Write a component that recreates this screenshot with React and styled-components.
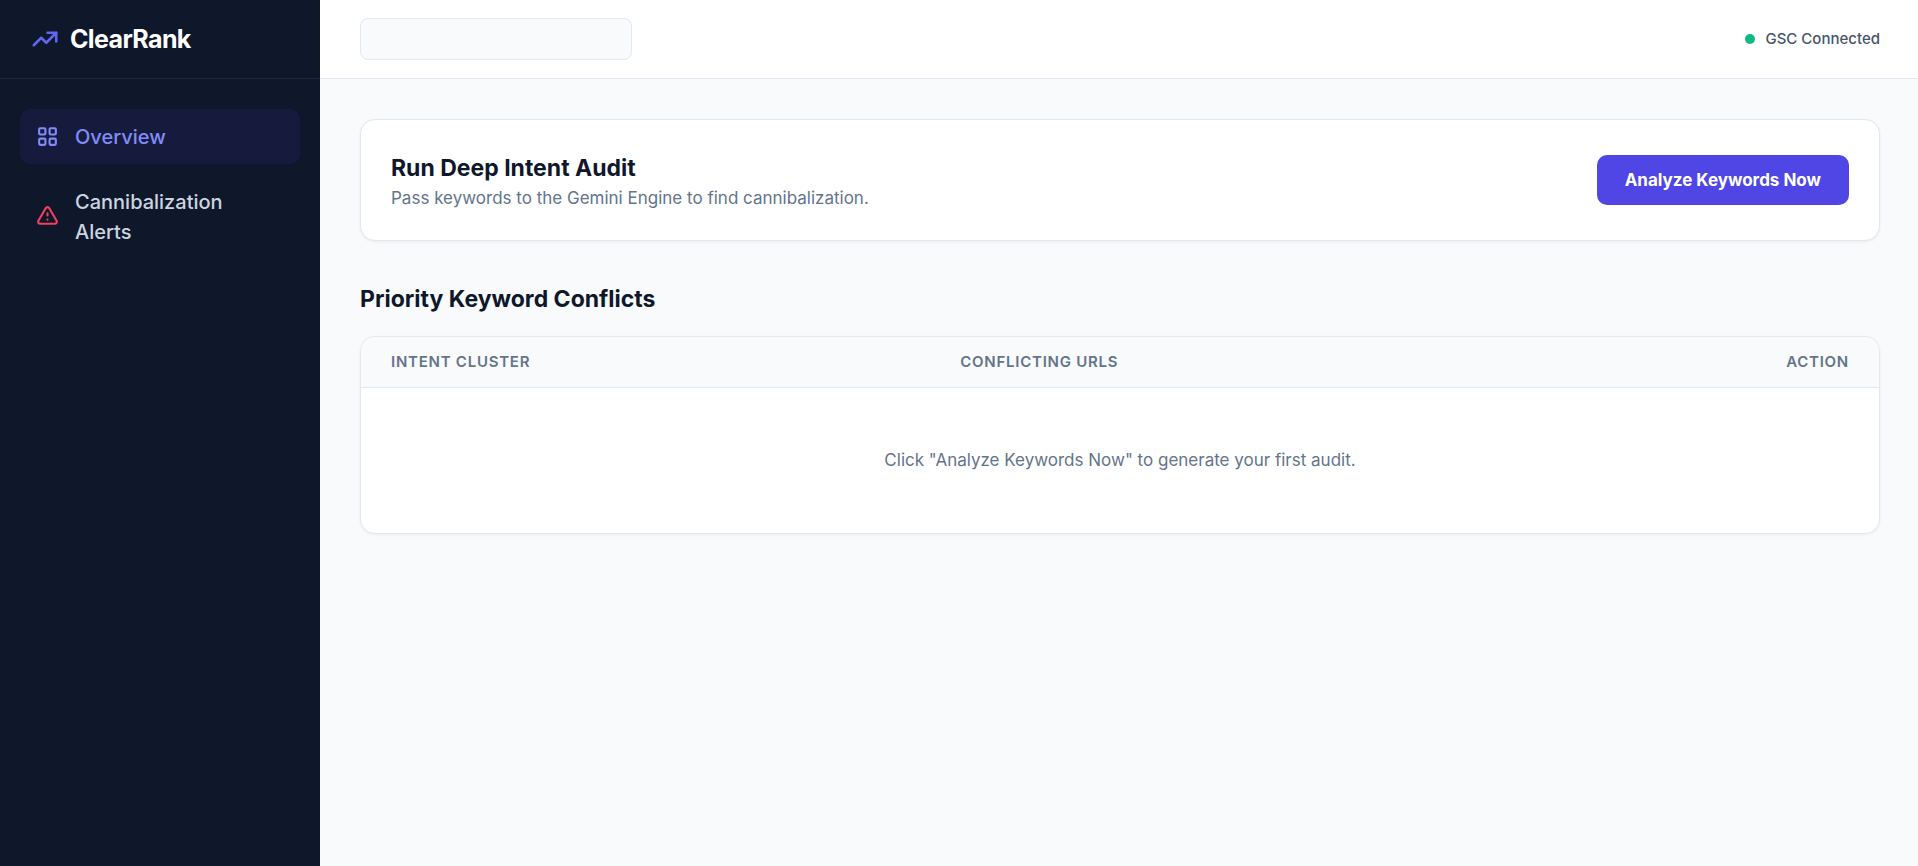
import React from "react";
import styled, { createGlobalStyle } from "styled-components";
import { TbLayoutGrid, TbTrendingUp } from "react-icons/tb";

const GlobalStyle = createGlobalStyle`
  * {
    box-sizing: border-box;
  }
  body {
    margin: 0;
    background-color: #f8fafc;
    color: #0f172a;
    font-family: Inter, "Liberation Sans", sans-serif;
  }
`;

const Container = styled.div`
  display: flex;
  min-height: 100vh;
`;

const Sidebar = styled.aside`
  width: 320px;
  flex-shrink: 0;
  background-color: #0f172a;
`;

const Brand = styled.div`
  display: flex;
  align-items: center;
  gap: 10px;
  height: 79px;
  padding: 0 30px;
  border-bottom: 1px solid #1e293b;
  color: #6366f1;
`;

const BrandName = styled.span`
  color: white;
  font-size: 25px;
  font-weight: 700;
  line-height: 35px;
  letter-spacing: -0.025em;
`;

const Nav = styled.nav`
  display: flex;
  flex-direction: column;
  gap: 10px;
  padding: 30px 20px;
`;

const NavItem = styled.a`
  display: flex;
  align-items: center;
  gap: 15px;
  padding: 13px 20px 12px 15px;
  border-radius: 10px;
  font-size: 20px;
  font-weight: 500;
  line-height: 30px;
  text-decoration: none;
  color: ${(props) => (props.$active ? "#818cf8" : "#cbd5e1")};
  background-color: ${(props) => (props.$active ? "#161b3d" : "transparent")};

  svg {
    flex-shrink: 0;
    margin-bottom: 2px;
    color: ${(props) => props.$iconColor};
  }
`;

const Main = styled.div`
  flex: 1;
  min-width: 0;
`;

const Topbar = styled.header`
  display: flex;
  align-items: center;
  justify-content: space-between;
  height: 79px;
  padding: 0 38px 0 40px;
  background-color: white;
  border-bottom: 1px solid #e2e8f0;
`;

const Search = styled.input`
  width: 272px;
  height: 42px;
  padding: 0 15px;
  border: 1px solid #e2e8f0;
  border-radius: 8px;
  background-color: #f8fafc;
  font: inherit;
`;

const Status = styled.div`
  display: flex;
  align-items: center;
  gap: 10px;
  color: #475569;
  font-size: 15px;
  font-weight: 500;
  line-height: 20px;
`;

const StatusDot = styled.span`
  width: 10px;
  height: 10px;
  border-radius: 50%;
  background-color: #10b981;
`;

const Content = styled.main`
  padding: 40px 38px 40px 40px;
`;

const Card = styled.section`
  border: 1px solid #e2e8f0;
  border-radius: 15px;
  background-color: white;
  box-shadow: 0 1px 3px rgba(15, 23, 42, 0.06);
  overflow: hidden;
`;

const AuditCard = styled(Card)`
  display: flex;
  align-items: center;
  justify-content: space-between;
  gap: 20px;
  padding: 30px;
  margin-bottom: 40px;
`;

const Title = styled.h2`
  margin: 0;
  font-size: 23px;
  font-weight: 700;
  line-height: 36px;
`;

const SectionTitle = styled(Title)`
  margin-bottom: 19px;
`;

const Desc = styled.p`
  margin: 0;
  color: #64748b;
  font-size: 17px;
  line-height: 24px;
`;

const Button = styled.button`
  height: 50px;
  padding: 0 28px;
  border: none;
  border-radius: 10px;
  background-color: #4f46e5;
  color: white;
  font-family: inherit;
  font-size: 17px;
  font-weight: 700;
  cursor: pointer;
`;

const Table = styled.table`
  width: 100%;
  border-collapse: collapse;
`;

const Th = styled.th`
  width: ${(props) => props.$width};
  padding: 15px 30px;
  border-bottom: 1px solid #e2e8f0;
  background-color: #f8fafc;
  color: #64748b;
  font-size: 15px;
  font-weight: 600;
  line-height: 20px;
  letter-spacing: 0.05em;
  text-align: ${(props) => props.$align || "left"};
  text-transform: uppercase;
`;

const EmptyCell = styled.td`
  padding: 60px 30px;
  color: #64748b;
  font-size: 17px;
  line-height: 25px;
  text-align: center;
`;

const AlertIcon = ({ size }) => (
  <svg
    width={size}
    height={size}
    viewBox="0 0 24 24"
    fill="none"
    stroke="currentColor"
    strokeWidth="2"
    strokeLinecap="round"
    strokeLinejoin="round"
    aria-hidden="true"
  >
    <path d="M12 9v2m0 4v.01" />
    <path d="M5 19h14a2 2 0 0 0 1.84 -2.75l-7.1 -12.25a2 2 0 0 0 -3.5 0l-7.1 12.25a2 2 0 0 0 1.75 2.75" />
  </svg>
);

const App = () => {
  return (
    <Container>
      <GlobalStyle />
      <Sidebar>
        <Brand>
          <TbTrendingUp size={30} />
          <BrandName>ClearRank</BrandName>
        </Brand>
        <Nav>
          <NavItem href="#overview" $active $iconColor="#818cf8">
            <TbLayoutGrid size={25} />
            Overview
          </NavItem>
          <NavItem href="#alerts" $iconColor="#f43f5e">
            <AlertIcon size={25} />
            Cannibalization Alerts
          </NavItem>
        </Nav>
      </Sidebar>
      <Main>
        <Topbar>
          <Search type="text" aria-label="Search" />
          <Status>
            <StatusDot />
            GSC Connected
          </Status>
        </Topbar>
        <Content>
          <AuditCard>
            <div>
              <Title>Run Deep Intent Audit</Title>
              <Desc>
                Pass keywords to the Gemini Engine to find cannibalization.
              </Desc>
            </div>
            <Button type="button">Analyze Keywords Now</Button>
          </AuditCard>
          <SectionTitle>Priority Keyword Conflicts</SectionTitle>
          <Card>
            <Table>
              <thead>
                <tr>
                  <Th $width="37.5%">Intent Cluster</Th>
                  <Th>Conflicting URLs</Th>
                  <Th $align="right">Action</Th>
                </tr>
              </thead>
              <tbody>
                <tr>
                  <EmptyCell colSpan={3}>
                    Click "Analyze Keywords Now" to generate your first audit.
                  </EmptyCell>
                </tr>
              </tbody>
            </Table>
          </Card>
        </Content>
      </Main>
    </Container>
  );
};

export default App;
